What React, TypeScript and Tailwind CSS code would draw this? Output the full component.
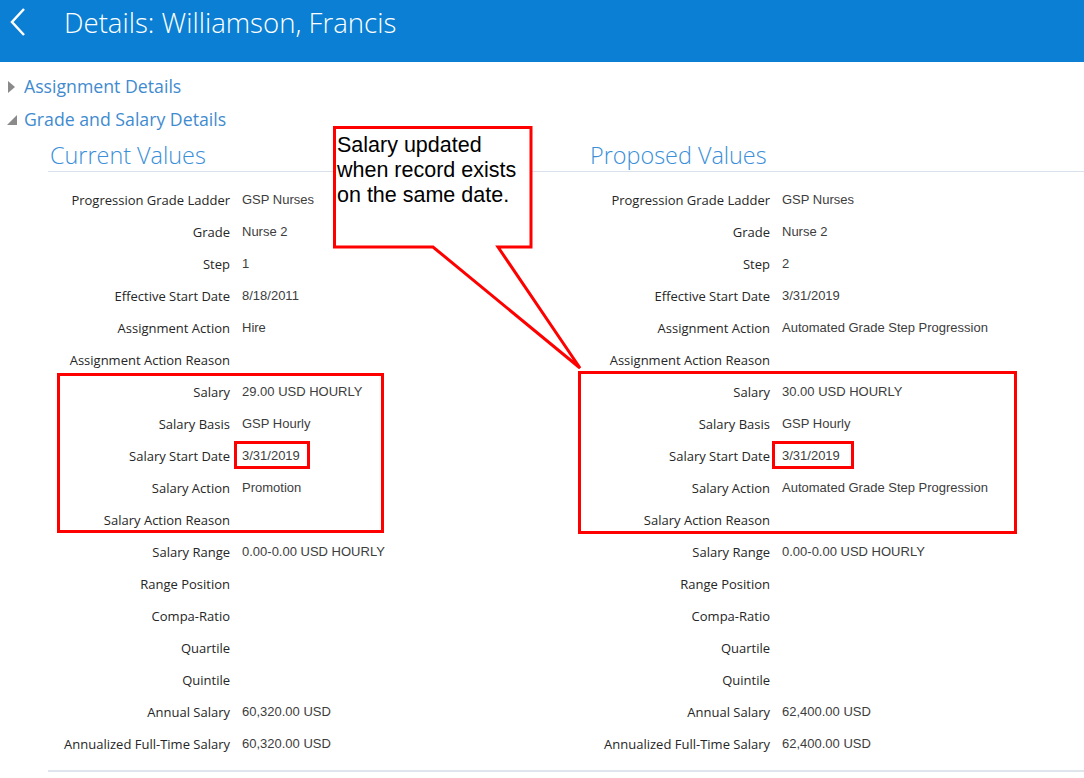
import React from "react";

type Row = [string, string];

const CURRENT: Row[] = [
  ["Progression Grade Ladder", "GSP Nurses"],
  ["Grade", "Nurse 2"],
  ["Step", "1"],
  ["Effective Start Date", "8/18/2011"],
  ["Assignment Action", "Hire"],
  ["Assignment Action Reason", ""],
  ["Salary", "29.00 USD HOURLY"],
  ["Salary Basis", "GSP Hourly"],
  ["Salary Start Date", "3/31/2019"],
  ["Salary Action", "Promotion"],
  ["Salary Action Reason", ""],
  ["Salary Range", "0.00-0.00 USD HOURLY"],
  ["Range Position", ""],
  ["Compa-Ratio", ""],
  ["Quartile", ""],
  ["Quintile", ""],
  ["Annual Salary", "60,320.00 USD"],
  ["Annualized Full-Time Salary", "60,320.00 USD"],
];

const PROPOSED: Row[] = [
  ["Progression Grade Ladder", "GSP Nurses"],
  ["Grade", "Nurse 2"],
  ["Step", "2"],
  ["Effective Start Date", "3/31/2019"],
  ["Assignment Action", "Automated Grade Step Progression"],
  ["Assignment Action Reason", ""],
  ["Salary", "30.00 USD HOURLY"],
  ["Salary Basis", "GSP Hourly"],
  ["Salary Start Date", "3/31/2019"],
  ["Salary Action", "Automated Grade Step Progression"],
  ["Salary Action Reason", ""],
  ["Salary Range", "0.00-0.00 USD HOURLY"],
  ["Range Position", ""],
  ["Compa-Ratio", ""],
  ["Quartile", ""],
  ["Quintile", ""],
  ["Annual Salary", "62,400.00 USD"],
  ["Annualized Full-Time Salary", "62,400.00 USD"],
];

const SEGOE = "font-['Open_Sans','Noto_Sans',sans-serif]";
const TAHOMA = "font-['Liberation_Sans','DejaVu_Sans',sans-serif]";

function ValuesColumn({ title, rows, className }: { title: string; rows: Row[]; className: string }) {
  return (
    <div className={className}>
      <div className="border-b border-[#d9e1ea] h-[30px] flex items-end">
        <h2 className={`${SEGOE} pl-[2px] text-[23.4px] font-light leading-[30px] text-[#3a8fd8] mb-[1px]`}>{title}</h2>
      </div>
      <div className="pt-[13px]">
        {rows.map(([label, value]) => (
          <div key={label} className="flex h-8 items-center">
            <div className={`${SEGOE} w-[182px] shrink-0 text-right text-[13px] text-[#262626]`}>{label}</div>
            <div className={`${TAHOMA} pl-[12px] text-[13px] text-[#3d3d3d] -mt-[2px]`}>{value}</div>
          </div>
        ))}
      </div>
    </div>
  );
}

function Toggle({ label, open }: { label: string; open: boolean }) {
  return (
    <div className="flex h-[33px] items-center">
      <div className="w-[24px] flex items-center pl-[6px]">
        {open ? (
          <svg width="12" height="12" viewBox="0 0 12 12">
            <polygon points="11,1 11,11 1,11" fill="#8a8a8a" />
          </svg>
        ) : (
          <svg width="10" height="14" viewBox="0 0 10 14">
            <polygon points="2,1 9,7 2,13" fill="#8a8a8a" />
          </svg>
        )}
      </div>
      <span className={`${SEGOE} text-[17.7px] text-[#3f8bcf]`}>{label}</span>
    </div>
  );
}

export default function App() {
  return (
    <div className="relative w-[1084px] h-[778px] overflow-hidden bg-white">
      <header className="flex h-[62px] items-start bg-[#0a7fd3]">
        <div className="w-[64px] pl-[9px] pt-[7px]">
          <svg width="18" height="30" viewBox="0 0 18 30">
            <polyline points="15,2 3,15 15,28" fill="none" stroke="white" strokeWidth="2.5" />
          </svg>
        </div>
        <h1 className={`${SEGOE} pt-[3px] text-[27.6px] font-light text-white leading-[38px]`}>
          Details: Williamson, Francis
        </h1>
      </header>

      <div className="pt-[8px]">
        <Toggle label="Assignment Details" open={false} />
        <Toggle label="Grade and Salary Details" open />
      </div>

      <div className="mt-[6px] pl-[48px] flex">
        <ValuesColumn title="Current Values" rows={CURRENT} className="w-[540px] shrink-0" />
        <ValuesColumn title="Proposed Values" rows={PROPOSED} className="flex-1" />
      </div>
      <div className="ml-[48px] mt-[9px] h-[2px] bg-[#dfe5ec]" />

      {/* annotation boxes */}
      <div className="absolute left-[57px] top-[373px] w-[327px] h-[160px] border-[3px] border-[#ff0000]" />
      <div className="absolute left-[234px] top-[441px] w-[76px] h-[28px] border-[3px] border-[#ff0000]" />
      <div className="absolute left-[578px] top-[371px] w-[439px] h-[163px] border-[3px] border-[#ff0000]" />
      <div className="absolute left-[772px] top-[441px] w-[82px] h-[28px] border-[3px] border-[#ff0000]" />

      {/* callout */}
      <svg className="absolute left-0 top-0" width="1084" height="778" viewBox="0 0 1084 778">
        <polygon
          points="334.5,127.5 531,127.5 531,247 498,247 580,368 433,247 334.5,247"
          fill="white"
          stroke="#ff0000"
          strokeWidth="3"
        />
      </svg>
      <div className="absolute left-[337px] top-[133px] font-['Liberation_Sans',Arial,sans-serif] text-[21.5px] leading-[25px] text-black">
        Salary updated
        <br />
        when record exists
        <br />
        on the same date.
      </div>
    </div>
  );
}
